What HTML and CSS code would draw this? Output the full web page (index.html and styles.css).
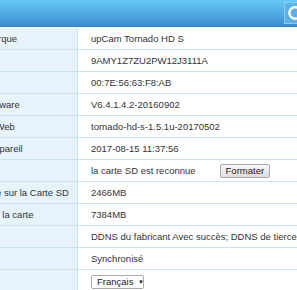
FILE: index.html
```html
<!DOCTYPE HTML>
<html>
<head>
  <title>Infos appareil</title>
  <meta http-equiv='content-type' content='text/html; charset=utf-8'>
  <link rel="stylesheet" href="styles.css">
</head>
<body>
  <div class="topBar">
    <div class="refreshBtn">
      <svg width="22" height="22" viewBox="0 0 22 22">
        <path d="M15.5 7.5 A6 6 0 1 0 16.5 12" fill="none" stroke="#fff" stroke-width="2.4"/>
        <path d="M12.5 6.5 L17.5 3.5 L17.5 9.5 Z" fill="#fff"/>
      </svg>
    </div>
  </div>
  <div class="infoBox">
    <div class="row"><div class="label">Nom de marque</div><div class="value">upCam Tornado HD S</div></div>
    <div class="row"><div class="label">N° de série</div><div class="value">9AMY1Z7ZU2PW12J3111A</div></div>
    <div class="row"><div class="label">MAC</div><div class="value">00:7E:56:63:F8:AB</div></div>
    <div class="row"><div class="label">Version firmware</div><div class="value">V6.4.1.4.2-20160902</div></div>
    <div class="row"><div class="label">Version UI Web</div><div class="value">tornado-hd-s-1.5.1u-20170502</div></div>
    <div class="row"><div class="label">Date de l'appareil</div><div class="value">2017-08-15 11:37:56</div></div>
    <div class="row"><div class="label">Carte SD</div><div class="value">la carte SD est reconnue<span class="formatBtn">Formater</span></div></div>
    <div class="row"><div class="label">Espace libre sur la Carte SD</div><div class="value">2466MB</div></div>
    <div class="row"><div class="label">Capacité de la carte</div><div class="value">7384MB</div></div>
    <div class="row"><div class="label">DDNS</div><div class="value">DDNS du fabricant Avec succès; DDNS de tierce partie Désactivé</div></div>
    <div class="row"><div class="label">NTP</div><div class="value">Synchronisé</div></div>
    <div class="row"><div class="label">Langue</div><div class="value"><span class="langSelect">Français <span class="arrow">▼</span></span></div></div>
  </div>
</body>
</html>
```

FILE: styles.css
```css
body {
  margin: 0;
  width: 297px;
  height: 290px;
  overflow: hidden;
  background-color: #fff;
  font-family: "Liberation Sans", Arial, sans-serif;
  font-size: 9.5px;
  color: #333;
}

.topBar {
  height: 26px;
  display: flex;
  justify-content: flex-end;
  align-items: center;
  background: linear-gradient(to bottom, #66caf7, #3d8ecf);
  border-bottom: 1px solid #3a80bb;
}

.refreshBtn {
  width: 21px;
  height: 20px;
  margin-right: -10px;
  border: 1px solid #8ccbf0;
  background-color: #5fb0e4;
  display: flex;
  align-items: center;
  justify-content: center;
}

.infoBox {
  margin-top: 1px;
  margin-left: -62px;
  white-space: nowrap;
}

.row {
  display: grid;
  grid-template-columns: 140px 1fr;
  height: 21px;
  border-bottom: 1px solid #c8e3f4;
}

.label {
  display: flex;
  align-items: center;
  padding-left: 11px;
  background-color: #e7f3fb;
  border-right: 1px solid #c8e3f4;
  overflow: hidden;
}

.value {
  display: flex;
  align-items: center;
  padding-left: 13px;
  background-color: #fff;
}

.formatBtn {
  display: inline-block;
  margin-left: 24px;
  padding: 0 5px;
  height: 12px;
  line-height: 12px;
  border: 1px solid #a8a8a8;
  border-radius: 2px;
  background: linear-gradient(to bottom, #f8f8f8, #dedede);
  color: #222;
}

.langSelect {
  display: inline-block;
  width: 46px;
  height: 12px;
  line-height: 12px;
  margin-top: 2px;
  padding-left: 5px;
  border: 1px solid #aaa;
  border-radius: 2px;
  background-color: #fff;
  color: #222;
}

.arrow {
  font-size: 6px;
  margin-left: 2px;
  vertical-align: 1px;
}
```
